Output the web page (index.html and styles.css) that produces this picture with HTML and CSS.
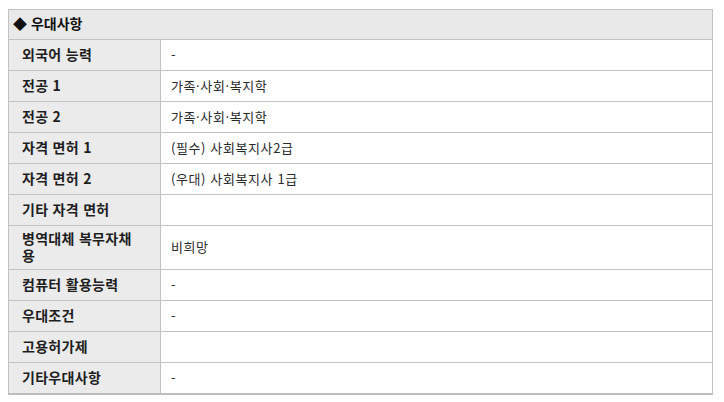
FILE: index.html
```html
<!DOCTYPE html>
<html lang="ko">
<head>
<meta charset="utf-8">
<title>우대사항</title>
<link rel="stylesheet" href="styles.css">
</head>
<body>
<table class="info">
  <thead>
    <tr><th class="title" colspan="2">◆ 우대사항</th></tr>
  </thead>
  <tbody>
    <tr><th>외국어 능력</th><td>-</td></tr>
    <tr><th>전공 1</th><td>가족·사회·복지학</td></tr>
    <tr><th>전공 2</th><td>가족·사회·복지학</td></tr>
    <tr><th>자격 면허 1</th><td>(필수) 사회복지사2급</td></tr>
    <tr><th>자격 면허 2</th><td>(우대) 사회복지사 1급</td></tr>
    <tr><th>기타 자격 면허</th><td></td></tr>
    <tr class="tall"><th>병역대체 복무자채용</th><td>비희망</td></tr>
    <tr><th>컴퓨터 활용능력</th><td>-</td></tr>
    <tr><th>우대조건</th><td>-</td></tr>
    <tr><th>고용허가제</th><td></td></tr>
    <tr><th>기타우대사항</th><td>-</td></tr>
  </tbody>
</table>
</body>
</html>
```
FILE: styles.css
```css
html, body {
  background: #ffffff;
}
body {
  margin: 9px 8px 8px 8px;
  font-family: "Noto Sans CJK KR", "Noto Sans", sans-serif;
  font-size: 13px;
  color: #222222;
}
.info {
  width: 705px;
  border-collapse: collapse;
  border-bottom: 2px solid #bdbdbd;
}
.info th,
.info td {
  border: 1px solid #c2c2c2;
  height: 28px;
  padding: 0 0 2px 0;
  text-align: left;
  vertical-align: middle;
  line-height: 17px;
}
.info th {
  width: 118px;
  padding: 0 20px 2px 13px;
  background: #ebebeb;
  font-size: 14px;
  font-weight: bold;
  letter-spacing: 0.3px;
  color: #1e1e1e;
}
.info td {
  padding-left: 10px;
  letter-spacing: 0.6px;
  color: #2a2a2a;
}
.info .title {
  width: auto;
  height: 27px;
  padding-left: 4px;
  background: #e9e9e9;
  letter-spacing: 0;
  color: #111111;
}
.info .tall th,
.info .tall td {
  height: 41px;
}
```
